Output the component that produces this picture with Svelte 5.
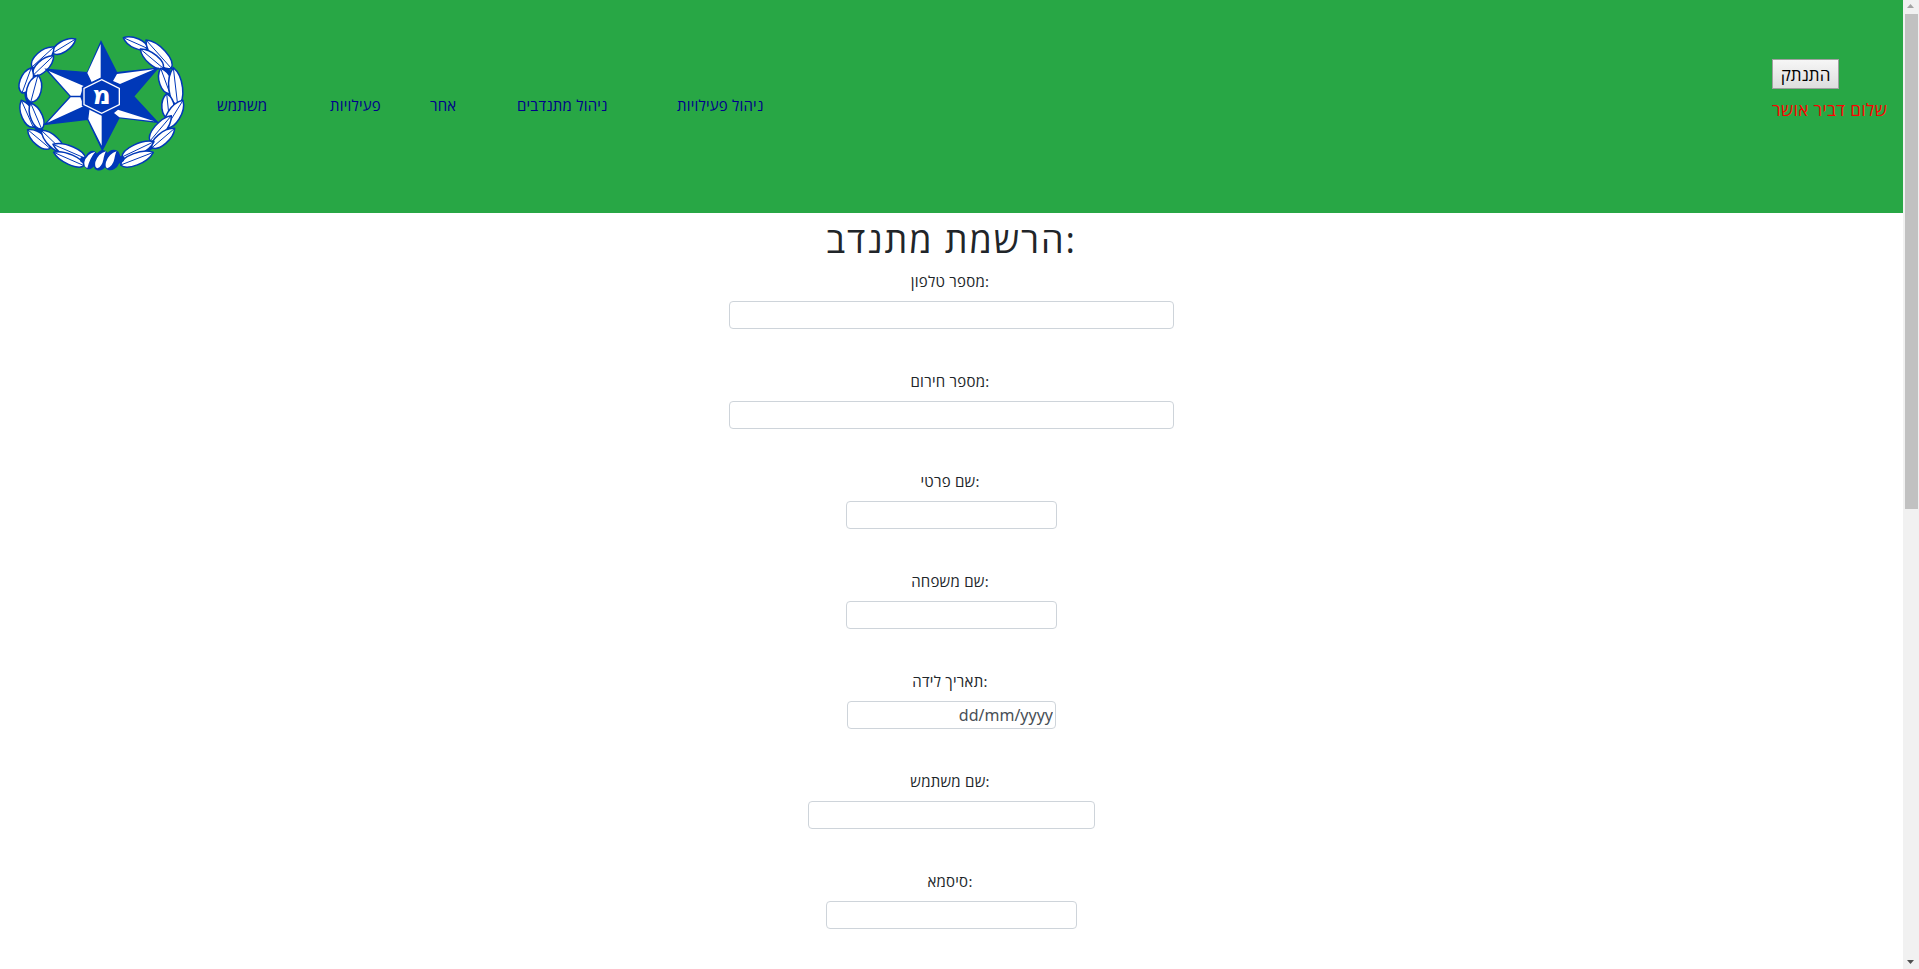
<script>
  const nav = [
    { text: 'משתמש', width: 113 },
    { text: 'פעילויות', width: 100 },
    { text: 'אחר', width: 87 },
    { text: 'ניהול מתנדבים', width: 160 },
    { text: 'ניהול פעילויות', width: 110 }
  ];
  const fields = [
    { label: 'מספר טלפון:', width: 445 },
    { label: 'מספר חירום:', width: 445 },
    { label: 'שם פרטי:', width: 211 },
    { label: 'שם משפחה:', width: 211 },
    { label: 'תאריך לידה:', width: 209, value: 'dd/mm/yyyy' },
    { label: 'שם משתמש:', width: 287 },
    { label: 'סיסמא:', width: 251 }
  ];
  // Each leaf runs from its tip to its base; the last number is the bulge.
  const leaves = [
    [197, 42, 128, 84, 17], [132, 66, 66, 126, 20], [131, 92, 70, 150, 18],
    [64, 128, 36, 204, 20], [84, 150, 62, 232, 23], [34, 226, 70, 307, 20],
    [62, 234, 95, 312, 19], [53, 314, 120, 370, 19], [94, 316, 160, 379, 18],
    [129, 358, 226, 400, 18], [131, 382, 222, 422, 16],
    [340, 38, 412, 70, 16], [408, 45, 484, 130, 22], [391, 72, 460, 130, 17],
    [452, 130, 480, 206, 20], [490, 128, 503, 240, 22], [470, 206, 478, 282, 20],
    [519, 226, 468, 308, 21], [484, 272, 420, 348, 18], [494, 310, 426, 368, 18],
    [432, 350, 336, 396, 18], [430, 382, 332, 420, 19]
  ];
  function leaf([x1, y1, x2, y2, w]) {
    const dx = x2 - x1, dy = y2 - y1, l = Math.hypot(dx, dy);
    const nx = (-dy / l) * w * 1.25, ny = (dx / l) * w * 1.25;
    const p = (t, s) => `${x1 + dx * t + nx * s} ${y1 + dy * t + ny * s}`;
    return `M${x1} ${y1}C${p(0.25, 1)} ${p(0.9, 1)} ${x2} ${y2}C${p(0.9, -1)} ${p(0.25, -1)} ${x1} ${y1}Z`;
  }
</script>

<div class="window">
  <div class="page">
    <header>
      <svg class="emblem" viewBox="0 0 555 465">
        <g fill="none" stroke="#0038b8" stroke-width="18" stroke-linecap="round">
          <path d="M132 76Q92 100 67 146T58 230Q60 290 100 328T160 378L226 410" />
          <path d="M405 68Q450 100 472 140T490 218Q492 280 462 314T420 366L334 408" />
        </g>
        <g stroke="#0038b8" stroke-linejoin="round">
          {#each leaves as l}
            <path d={leaf(l)} fill="#fff" stroke-width="4.5" />
            <path d={`M${l[0]} ${l[1]}L${l[2]} ${l[3]}`} stroke-width="3" />
          {/each}
        </g>
        <g fill="#0038b8">
          <ellipse cx="242" cy="405" rx="19" ry="29" transform="rotate(22 242 405)" />
          <ellipse cx="273" cy="406" rx="22" ry="32" transform="rotate(22 273 406)" />
          <ellipse cx="306" cy="405" rx="24" ry="32" transform="rotate(22 306 405)" />
          <circle cx="219" cy="404" r="9" />
          <circle cx="334" cy="402" r="9" />
        </g>
        <g fill="#fff">
          <path d="M256 380Q229 386 223 412 222 427 232 429 239 400 256 380Z" />
          <path d="M288 379Q265 385 256 411 253 427 262 430 276 424 280 404T288 379Z" />
          <path d="M320 379Q297 386 288 411 284 427 292 430 309 422 313 402T320 379Z" />
        </g>
        <path d="M273 50 320 143 443 130 371 214 443 292 327 278 277 375 233 283 105 298 181 214 108 133 232 143Z" fill="#0038b8" stroke="#0038b8" stroke-width="4" />
        <path d="M272 57V158L245 171 232 144ZM433 133 321 147 309 168 330 177ZM433 289 328 277 312 264 324 254ZM275 362V268L239 250 235 282ZM116 138 182 212H211L221 183ZM112 293 182 217H211L222 243Z" fill="#fff" />
        <path d="M275 164 328 190V239L275 265 222 239V190Z" fill="#0038b8" stroke="#0038b8" stroke-width="13" />
        <path d="M275 164 328 190V239L275 265 222 239V190Z" fill="none" stroke="#fff" stroke-width="4" />
        <text x="275" y="238" text-anchor="middle" class="mem">מ</text>
      </svg>
      <nav>
        {#each nav as item}
          <a href="#top" style:width="{item.width}px">{item.text}</a>
        {/each}
      </nav>
      <div class="account">
        <button>התנתק</button>
        <span>שלום דביר אושר</span>
      </div>
    </header>
    <main>
      <h1>הרשמת מתנדב:</h1>
      {#each fields as f}
        <div class="field">
          <label for={f.label}>{f.label}</label>
          <input id={f.label} value={f.value ?? ''} style:width="{f.width}px" />
        </div>
      {/each}
    </main>
  </div>
  <div class="scrollbar">
    <svg width="16" height="14"><path d="M4 8 7.5 4 11 8Z" fill="#a3a3a3" /></svg>
    <div class="thumb"></div>
    <svg width="16" height="14" class="down"><path d="M4 5H11L7.5 9Z" fill="#505050" /></svg>
  </div>
</div>

<style>
  :global(body) { margin: 0; overflow: hidden; }
  .window {
    display: flex;
    height: 969px;
    overflow: hidden;
    background: #fff;
    color: #212529;
    font: 15px/24px 'Open Sans', 'Liberation Sans', sans-serif;
  }
  .page { width: 1903px; }
  header {
    display: flex;
    height: 213px;
    background: #28a745;
  }
  .emblem { width: 185px; height: 155px; margin: 25px 0 0 10px; flex: none; }
  .mem { font: bold 76px 'DejaVu Sans', sans-serif; fill: #fff; }
  nav { display: flex; padding: 93px 0 0 22px; flex: 1; }
  a { color: #00008b; text-decoration: none; white-space: nowrap; letter-spacing: 0.2px; }
  .account {
    width: 131px;
    padding-top: 59px;
    color: #f00;
    font-size: 17px;
    letter-spacing: 0.45px;
    white-space: nowrap;
  }
  button {
    display: block;
    box-sizing: border-box;
    width: 67px;
    height: 30px;
    margin: 0 0 9px;
    padding: 2px 0 0;
    border: 1px solid #a0a0a0;
    background: linear-gradient(#f6f6f6, #dedede);
    color: #000;
    font: 17px/26px 'Open Sans', 'Liberation Sans', sans-serif;
  }
  main { display: flex; flex-direction: column; align-items: center; }
  h1 {
    margin: 3px 0 5px;
    font-size: 36px;
    line-height: 48px;
    font-weight: 400;
    letter-spacing: 1.9px;
  }
  .field { display: flex; flex-direction: column; align-items: center; height: 100px; }
  label { height: 32px; padding-right: 3px; letter-spacing: 0.25px; }
  input {
    box-sizing: border-box;
    height: 28px;
    padding: 1px 2px;
    border: 1px solid #ced4da;
    border-radius: 4px;
    background: #fff;
    color: #495057;
    font: 16px/24px 'Noto Sans', sans-serif;
    text-align: right;
    outline: none;
  }
  .scrollbar { display: flex; flex-direction: column; width: 16px; background: #f1f1f1; }
  .scrollbar svg { display: block; }
  .thumb { width: 13px; height: 495px; margin-left: 2px; background: #c1c1c1; }
  .down { margin-top: auto; }
</style>
